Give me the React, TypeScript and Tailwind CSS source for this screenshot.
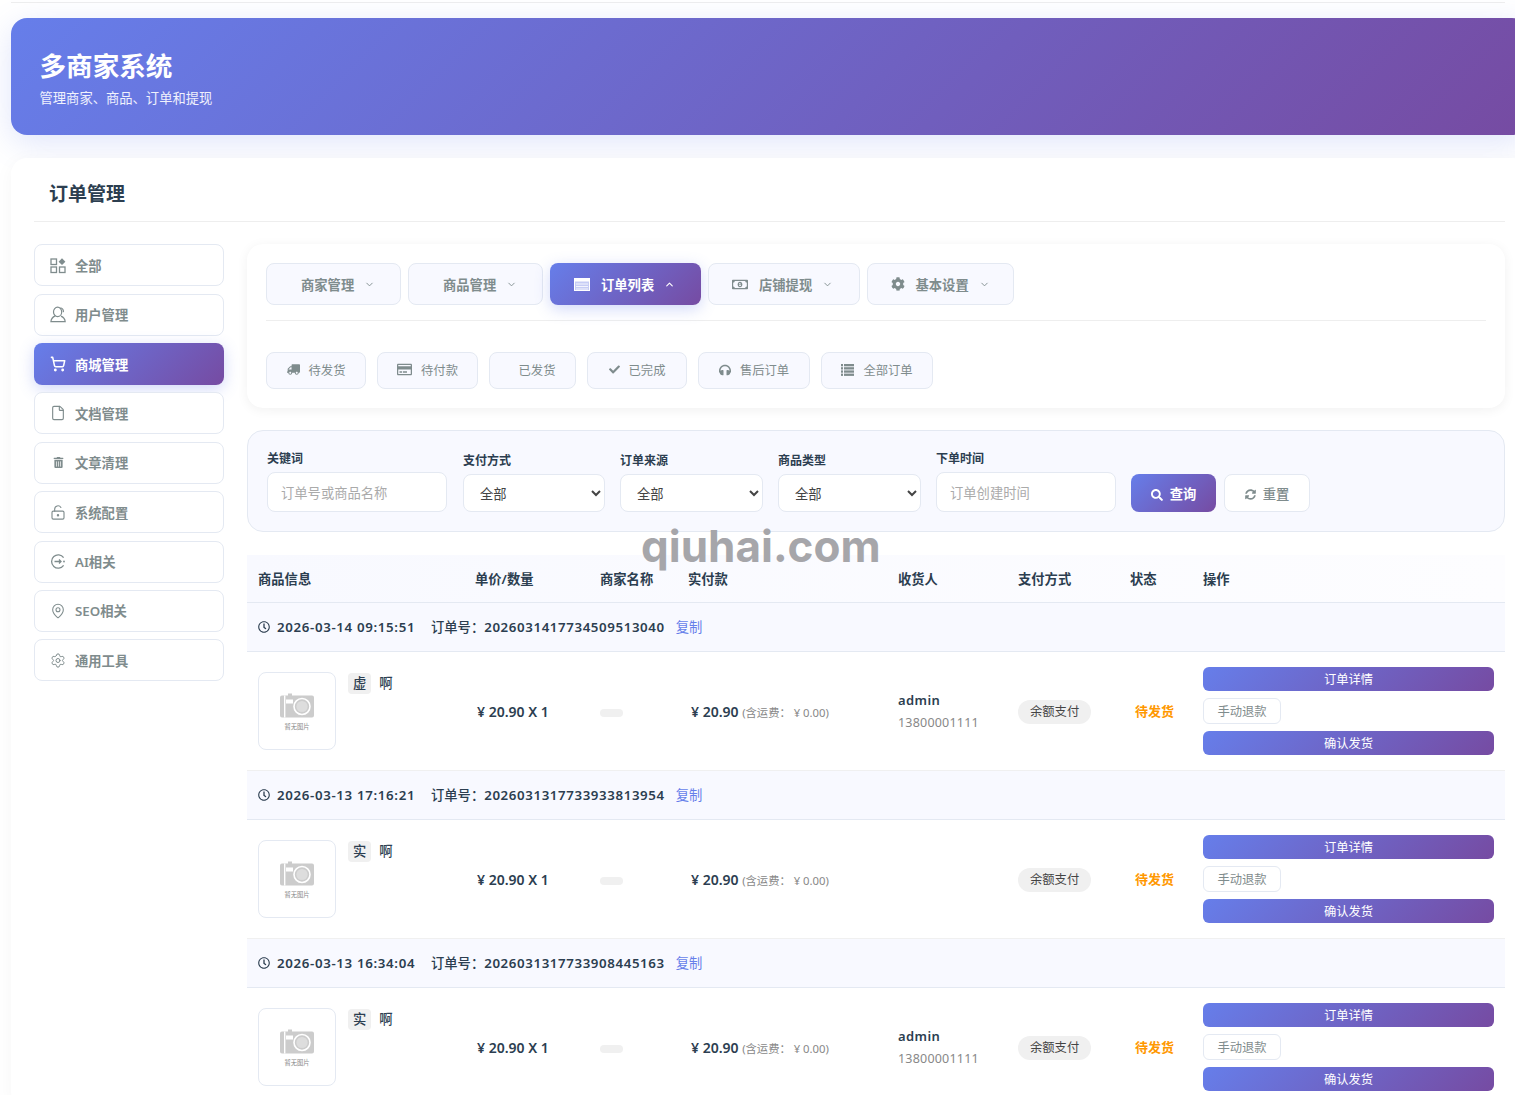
import React from 'react'
import { ChevronDown, ChevronUp, File, MapPin, Settings, ShoppingCart, LockKeyholeOpen } from 'lucide-react'
import { FaCheck, FaCog, FaHeadphones, FaRegClock, FaRegCreditCard, FaRegMoneyBillAlt, FaSearch, FaSyncAlt, FaTrashAlt, FaTruck } from 'react-icons/fa'

const gradient = 'bg-[linear-gradient(135deg,#667eea_0%,#764ba2_100%)]'

function GridIcon() {
  return (
    <svg width="17" height="17" viewBox="0 0 16 16" fill="none" stroke="currentColor" strokeWidth="1.3">
      <rect x="1" y="1.5" width="5.5" height="5.5" />
      <rect x="1" y="9.5" width="5.5" height="5.5" />
      <rect x="9.5" y="9.5" width="5.5" height="5.5" />
      <path d="M12 0.8 15.4 4.2 12 7.6 8.6 4.2Z" fill="currentColor" stroke="none" />
    </svg>
  )
}

function UserIcon() {
  return (
    <svg width="17" height="17" viewBox="0 0 16 16" fill="none" stroke="currentColor" strokeWidth="1.2">
      <ellipse cx="7.6" cy="5.4" rx="4.1" ry="4.7" />
      <path d="M5.2 9.4C3 10.4 1.2 12 0.9 15.2H15.2C15 12.4 13.4 10.6 11 9.6" />
      <path d="M10.4 1.2C12.4 1.8 13.6 3.4 13.4 5.6" />
    </svg>
  )
}

function AiIcon() {
  return (
    <svg width="17" height="17" viewBox="0 0 16 16" fill="none" stroke="currentColor" strokeWidth="1.3">
      <path d="M13.6 4.2A6.6 6.6 0 1 0 13.6 11.8" />
      <path d="M4.5 8H11M9 6l2 2-2 2" />
      <circle cx="14" cy="8" r="0.9" fill="currentColor" stroke="none" />
    </svg>
  )
}

function WindowIcon() {
  return (
    <svg width="16" height="13" viewBox="0 0 16 13">
      <rect x="0.5" y="0.5" width="15" height="12" fill="#c6cdf5" stroke="#ffffff" />
      <rect x="1" y="1" width="14" height="2.5" fill="#ffffff" />
      <path d="M2 6h12M2 8.5h12M2 11h12" stroke="#ffffff" strokeWidth="0.8" />
    </svg>
  )
}

function ListIcon() {
  return (
    <svg width="13" height="12" viewBox="0 0 13 12" fill="currentColor">
      <rect x="0" y="0" width="2" height="2.3" />
      <rect x="3" y="0" width="10" height="2.3" />
      <rect x="0" y="3.2" width="2" height="2.3" />
      <rect x="3" y="3.2" width="10" height="2.3" />
      <rect x="0" y="6.4" width="2" height="2.3" />
      <rect x="3" y="6.4" width="10" height="2.3" />
      <rect x="0" y="9.6" width="2" height="2.3" />
      <rect x="3" y="9.6" width="10" height="2.3" />
    </svg>
  )
}

function Camera() {
  return (
    <svg width="36" height="27" viewBox="0 0 36 26">
      <path d="M3 3h6V1h4v2h20a2 2 0 0 1 2 2v18a2 2 0 0 1-2 2H3a2 2 0 0 1-2-2V5a2 2 0 0 1 2-2Z" fill="#cccccc" />
      <rect x="5" y="3" width="1.4" height="22" fill="#ffffff" />
      <rect x="7" y="7" width="7" height="4" fill="#ffffff" />
      <circle cx="23" cy="14" r="8" fill="none" stroke="#ffffff" strokeWidth="1.6" />
      <circle cx="23" cy="14" r="5.6" fill="#dddddd" />
    </svg>
  )
}

const sideItems = [
  { label: '全部', icon: <GridIcon /> },
  { label: '用户管理', icon: <UserIcon /> },
  { label: '商城管理', icon: <ShoppingCart size={18} strokeWidth={2.3} />, active: true },
  { label: '文档管理', icon: <File size={18} strokeWidth={1.7} /> },
  { label: '文章清理', icon: <FaTrashAlt size={11} /> },
  { label: '系统配置', icon: <LockKeyholeOpen size={17} strokeWidth={1.7} /> },
  { label: 'AI相关', icon: <AiIcon /> },
  { label: 'SEO相关', icon: <MapPin size={18} strokeWidth={1.6} /> },
  { label: '通用工具', icon: <Settings size={21} strokeWidth={1.5} /> },
]

const navItems = [
  { label: '商家管理', width: 'w-[135px]', pad: 'pl-[34px]' },
  { label: '商品管理', width: 'w-[135px]', pad: 'pl-[34px]' },
  { label: '订单列表', width: 'w-[151px]', pad: 'pl-[24px]', gap: 'mr-[11px]', icon: <WindowIcon />, active: true },
  { label: '店铺提现', width: 'w-[151.5px]', pad: 'pl-[23px]', gap: 'mr-[11px]', icon: <FaRegMoneyBillAlt size={17} /> },
  { label: '基本设置', width: 'w-[147px]', pad: 'pl-[22px]', gap: 'mr-[10px]', icon: <FaCog size={14} /> },
]

const subItems = [
  { label: '待发货', width: 'w-[100px]', icon: <FaTruck size={13} className="-scale-x-100" /> },
  { label: '待付款', width: 'w-[101px]', icon: <FaRegCreditCard size={15} /> },
  { label: '已发货', width: 'w-[87px] pl-[9px]' },
  { label: '已完成', width: 'w-[100px]', icon: <FaCheck size={11} /> },
  { label: '售后订单', width: 'w-[112px]', icon: <FaHeadphones size={12} /> },
  { label: '全部订单', width: 'w-[112px]', icon: <ListIcon /> },
]

const orders = [
  { time: '2026-03-14 09:15:51', no: '2026031417734509513040', tag: '虚', admin: true },
  { time: '2026-03-13 17:16:21', no: '2026031317733933813954', tag: '实', admin: false },
  { time: '2026-03-13 16:34:04', no: '2026031317733908445163', tag: '实', admin: true },
]

const cols = 'grid grid-cols-[217px_125px_88px_210px_120px_112px_73px_1fr] pl-[11px] pr-[11px]'

function Field({ label, children }: { label: string; children: React.ReactNode }) {
  return (
    <div className="flex flex-col gap-[5px]">
      <label className="text-[12px] leading-[16px] font-semibold text-[#2c3e50]">{label}</label>
      {children}
    </div>
  )
}

function FilterSelect({ width }: { width: string }) {
  return (
    <select className={`${width} h-[38px] rounded-lg border border-[#e4e9f2] bg-white pt-[2px] pl-[12px] text-[13.3px] text-[#444] outline-none`}>
      <option>全部</option>
    </select>
  )
}

function OrderRows({ order }: { order: (typeof orders)[number] }) {
  return (
    <>
      <div className="flex h-[49px] items-center gap-[7px] border-b border-[#e4e9f2] bg-[#f8f9ff] pl-[11px] text-[13.3px] text-[#2c3e50]">
        <FaRegClock size={12} />
        <span className="w-[147px] pt-[2px] font-semibold tracking-[0.65px] whitespace-nowrap">{order.time}</span>
        <span className="pt-[2px] font-semibold tracking-[0.6px] whitespace-nowrap">
          <span className="font-medium tracking-normal">订单号：</span>
          {order.no}
        </span>
        <a className="ml-[4px] pt-[2px] text-[#667eea]">复制</a>
      </div>
      <div className={`${cols} h-[119px] items-center border-b border-[#f0f0f0] text-[#2c3e50]`}>
        <div className="flex gap-[12px] self-start pt-[20px]">
          <div className="flex h-[78px] w-[78px] flex-col items-center justify-center rounded-lg border border-[#e4e9f2] bg-white">
            <Camera />
            <span className="mt-[3px] text-[6.3px] leading-[9px] text-[#888]">暂无图片</span>
          </div>
          <div className="flex h-[22px] items-center gap-[8px] text-[13.3px] font-medium">
            <span className="rounded bg-[#f0f0f0] px-[5px] leading-[21px]">{order.tag}</span>
            <span className="pt-[2px]">啊</span>
          </div>
        </div>
        <div className="pt-[1px] pl-[2px] text-[14px] font-semibold">¥ 20.90 X 1</div>
        <div className="pt-[4px]">
          <div className="h-[8px] w-[23px] rounded-full bg-[#f0f0f0]" />
        </div>
        <div className="pt-[1px] pl-[3px] text-[14px] font-semibold whitespace-nowrap">
          ¥ 20.90 <span className="text-[11.3px] font-normal text-[#888]">(含运费： ¥ 0.00)</span>
        </div>
        <div className={order.admin ? '' : 'invisible'}>
          <div className="text-[13px] leading-[20px] font-semibold tracking-[0.4px]">admin</div>
          <div className="mt-[4px] text-[12.5px] leading-[18px] tracking-[0.2px] text-[#888]">13800001111</div>
        </div>
        <div>
          <span className="inline-block rounded-full bg-[#f0f0f0] px-[12px] text-[12.3px] leading-[24px] text-[#444]">余额支付</span>
        </div>
        <div className="pt-[2px] pl-[5px] text-[13px] font-semibold text-[#ff9800]">待发货</div>
        <div className="flex flex-col items-start gap-[7px]">
          <button className={`${gradient} h-[24px] w-full rounded-md pt-[2px] text-[12.3px] text-white`}>订单详情</button>
          <button className="h-[26px] w-[78px] rounded-md border border-[#e4e9f2] bg-white pt-[2px] text-[12.3px] text-[#7f8c8d]">手动退款</button>
          <button className={`${gradient} h-[24px] w-full rounded-md pt-[2px] text-[12.3px] text-white`}>确认发货</button>
        </div>
      </div>
    </>
  )
}

export default function App() {
  return (
    <div className="relative h-[1095px] w-[1515px] overflow-hidden bg-white font-['Noto_Sans','Noto_Sans_CJK_SC',sans-serif]">
      <div className="ml-[11px] w-[1517px]">
        <div className="h-[18px] pt-[2px]">
          <div className="h-px w-[1494px] bg-[#eeeeee]" />
        </div>

        <div className={`${gradient} flex h-[117px] flex-col justify-center rounded-2xl pt-[2px] pl-[28.5px] text-white shadow-[0_8px_32px_rgba(102,126,234,0.2)]`}>
          <h1 className="text-[26.6px] leading-[36px] font-bold">多商家系统</h1>
          <p className="mt-[4px] text-[13.3px] leading-[20px] text-white/90">管理商家、商品、订单和提现</p>
        </div>

        <div className="mt-[23px] rounded-2xl bg-white px-[23px] shadow-[0_4px_20px_rgba(0,0,0,0.04)]">
          <div className="flex h-[64px] items-center border-b border-[#eeeeee] pl-[15px]">
            <h2 className="pt-[9px] text-[19px] font-bold text-[#2c3e50]">订单管理</h2>
          </div>

          <div className="mt-[22px] flex gap-[23px]">
            <aside className="mt-[0.2px] flex w-[190px] shrink-0 flex-col gap-[7.4px]">
              {sideItems.map((item) => (
                <div
                  key={item.label}
                  className={
                    item.active
                      ? `${gradient} flex h-[42px] items-center gap-[9px] rounded-lg pl-[16px] text-[13.3px] font-semibold text-white shadow-[0_4px_15px_rgba(102,126,234,0.3)]`
                      : 'flex h-[42px] items-center gap-[9px] rounded-lg border border-[#e4e9f2] bg-white pl-[15px] text-[13.3px] font-semibold text-[#7f8c8d]'
                  }
                >
                  <span className="flex w-[16px] justify-center">{item.icon}</span>
                  <span className="pt-[3px]">{item.label}</span>
                </div>
              ))}
            </aside>

            <main className="w-[1258px] shrink-0">
              <div className="h-[164px] rounded-2xl bg-white px-[19px] pt-[19px] shadow-[0_2px_12px_rgba(0,0,0,0.06)]">
                <div className="flex gap-[7px] border-b border-[#eeeeee] pb-[15px]">
                  {navItems.map((item) => (
                    <div
                      key={item.label}
                      className={
                        item.active
                          ? `${gradient} ${item.width} ${item.pad} flex h-[42px] items-center rounded-lg text-[13.3px] font-semibold text-white shadow-[0_4px_15px_rgba(102,126,234,0.3)]`
                          : `${item.width} ${item.pad} flex h-[42px] items-center rounded-lg border border-[#e4e9f2] bg-[#f8f9ff] text-[13.3px] font-semibold text-[#7f8c8d]`
                      }
                    >
                      {item.icon && <span className={`${item.gap} flex w-[16px] justify-center`}>{item.icon}</span>}
                      <span className="pt-[4px]">{item.label}</span>
                      {item.active ? (
                        <ChevronUp size={11} strokeWidth={2.5} className="ml-[10px]" />
                      ) : (
                        <ChevronDown size={11} className="ml-[10px]" />
                      )}
                    </div>
                  ))}
                </div>
                <div className="mt-[31px] flex gap-[11px]">
                  {subItems.map((item) => (
                    <div
                      key={item.label}
                      className={`${item.width} flex h-[37px] items-center justify-center gap-[9px] rounded-lg border border-[#e4e9f2] bg-[#f8f9ff] text-[12.3px] text-[#7f8c8d]`}
                    >
                      {item.icon && <span className="-translate-y-[1px]">{item.icon}</span>}
                      <span className="pt-[2px]">{item.label}</span>
                    </div>
                  ))}
                </div>
              </div>

              <div className="mt-[22px] flex h-[102px] items-end gap-[15px] rounded-2xl border border-[#e4e9f2] bg-[#f8f9ff] pb-[19px] pl-[19px]">
                <div className="mr-[1px]">
                  <Field label="关键词">
                    <input placeholder="订单号或商品名称" className="h-[40px] w-[180px] rounded-lg border border-[#e4e9f2] bg-white pt-[2px] pl-[13px] text-[13.3px] outline-none placeholder:text-[#aaaaaa]" />
                  </Field>
                </div>
                <Field label="支付方式"><FilterSelect width="w-[142px]" /></Field>
                <Field label="订单来源"><FilterSelect width="w-[143px]" /></Field>
                <Field label="商品类型"><FilterSelect width="w-[143px]" /></Field>
                <Field label="下单时间">
                  <input placeholder="订单创建时间" className="h-[40px] w-[180px] rounded-lg border border-[#e4e9f2] bg-white pt-[2px] pl-[13px] text-[13.3px] outline-none placeholder:text-[#aaaaaa]" />
                </Field>
                <div className="flex gap-[8px]">
                  <button className={`${gradient} flex h-[38px] w-[85px] items-center justify-center gap-[7px] rounded-lg pt-[3px] text-[13.3px] font-semibold text-white`}>
                    <FaSearch size={12} />查询
                  </button>
                  <button className="flex h-[38px] w-[86px] items-center justify-center gap-[7px] rounded-lg border border-[#e4e9f2] bg-white pt-[3px] text-[13.3px] font-medium text-[#7f8c8d]">
                    <FaSyncAlt size={11} />重置
                  </button>
                </div>
              </div>

              <div className="mt-[23px]">
                <div className={`${cols} h-[48px] items-center border-b border-[#e4e9f2] bg-[linear-gradient(90deg,#f8f9ff,#fdfdff)] pt-[2px] text-[13.3px] font-semibold text-[#2c3e50]`}>
                  <div>商品信息</div>
                  <div>单价/数量</div>
                  <div>商家名称</div>
                  <div>实付款</div>
                  <div>收货人</div>
                  <div>支付方式</div>
                  <div>状态</div>
                  <div>操作</div>
                </div>
                {orders.map((order) => (
                  <OrderRows key={order.no} order={order} />
                ))}
              </div>
            </main>
          </div>
        </div>
      </div>
      <div className="absolute top-[526px] left-[641px] font-['Inter',sans-serif] text-[44px] leading-[40px] font-bold text-[#a6a6aa]">qiuhai.com</div>
    </div>
  )
}
